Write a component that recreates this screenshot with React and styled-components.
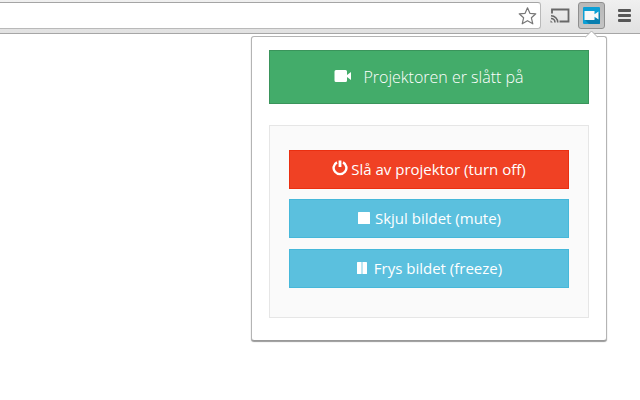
import React from "react";
import styled, { createGlobalStyle } from "styled-components";

const GlobalStyle = createGlobalStyle`
  * { box-sizing: border-box; }
  body {
    margin: 0;
    background: #fff;
    overflow: hidden;
    font-family: "Open Sans", "Noto Sans", sans-serif;
  }
`;

const Screen = styled.main`
  position: relative;
  width: 640px;
  height: 400px;
  overflow: hidden;
`;

const Toolbar = styled.header`
  display: flex;
  align-items: flex-start;
  height: 34px;
  padding-top: 2px;
  background: linear-gradient(#f0f0f0, #e1e1e1);
  border-bottom: 1px solid #a6a6a6;
`;

const AddressField = styled.div`
  display: flex;
  justify-content: flex-end;
  width: 541px;
  height: 27px;
  padding: 3px 3px 0 0;
  background: #fff;
  border: 1px solid #b9b9b9;
  border-top-color: #a5a5a5;
  border-left: 0;
  border-radius: 0 3px 3px 0;
`;

const Actions = styled.div`
  display: flex;
  flex: 1;
`;

const CastIcon = styled.svg`
  width: 20px;
  height: 17px;
  margin: 5px 0 0 9px;
`;

const ExtensionButton = styled.button`
  display: flex;
  width: 27px;
  height: 27px;
  margin-left: 8px;
  padding: 4px;
  background: linear-gradient(#b8b8b8, #c4c4c4);
  border: 1px solid #8f8f8f;
  border-radius: 3px;
`;

const MenuIcon = styled.svg`
  width: 13px;
  height: 14px;
  margin: 7px 0 0 13px;
`;

const Popup = styled.section`
  position: absolute;
  left: 251px;
  top: 36px;
  width: 356px;
  height: 305px;
  padding: 13px 17px;
  background: #fff;
  border: 1px solid #b4b4b4;
  border-bottom-color: #999;
  border-radius: 3px;
  box-shadow: 0 1px 1px #999;
`;

const PopupArrow = styled.svg`
  position: absolute;
  left: 333px;
  top: -7px;
  width: 13px;
  height: 8px;
`;

const StatusBanner = styled.div`
  display: flex;
  align-items: center;
  justify-content: center;
  gap: 12px;
  height: 54px;
  padding-right: 1px;
  background: #43ac6a;
  border: 1px solid #3a945b;
  color: #fff;
  font-size: 16px;
  font-weight: 300;
  white-space: nowrap;
`;

const ControlPanel = styled.div`
  display: flex;
  flex-direction: column;
  height: 193px;
  margin-top: 21px;
  padding: 24px 19px;
  background: #fafafa;
  border: 1px solid #e6e6e6;
`;

const tones = {
  danger: { fill: "#f04124", edge: "#ea2f10", inset: 0 },
  info: { fill: "#5bc0de", edge: "#46b8da", inset: 1 },
};

const ControlButton = styled.button`
  display: flex;
  align-items: center;
  justify-content: center;
  gap: ${({ $gap }) => $gap}px;
  height: 39px;
  margin: 0 0 ${({ $below }) => $below}px;
  padding: 0 0 2px ${({ $tone }) => tones[$tone].inset}px;
  background: ${({ $tone }) => tones[$tone].fill};
  border: 1px solid ${({ $tone }) => tones[$tone].edge};
  color: #fff;
  font: 400 15px "Open Sans", "Noto Sans", sans-serif;
  white-space: nowrap;
`;

const Glyph = styled.svg`
  flex: none;
  width: ${({ $w }) => $w}px;
  height: ${({ $h }) => $h}px;
  margin-bottom: ${({ $raise = 0 }) => $raise}px;
`;

export default function App() {
  return (
    <Screen>
      <GlobalStyle />
      <Toolbar>
        <AddressField>
          <Glyph $w={20} $h={20} viewBox="0 0 20 20">
            <path
              d="M10.5 1.8 L12.9 7.3 L18.8 7.8 L14.4 11.8 L15.8 17.8 L10.5 14.7 L5.2 17.8 L6.6 11.8 L2.2 7.8 L8.1 7.3 Z"
              fill="#fff" stroke="#777" strokeWidth="1.2" strokeLinejoin="round"
            />
          </Glyph>
        </AddressField>
        <Actions>
          <CastIcon viewBox="0 0 20 17" fill="none" stroke="#686868">
            <path d="M2 6.5 V2.5 H18.5 V14.5 H9.5" strokeWidth="1.8" />
            <path d="M1 8.7 A6.8 6.8 0 0 1 7.8 15.5 M1 11.5 A4 4 0 0 1 5 15.5" strokeWidth="1.6" />
            <path d="M.5 13.2 L2.8 15.5 H.5 Z" fill="#686868" stroke="none" />
          </CastIcon>
          <ExtensionButton aria-label="Projektor">
            <Glyph $w={17} $h={17} viewBox="0 0 17 17">
              <rect width="17" height="17" rx="1" fill="#0b9fd5" />
              <path d="M12 12 L15.5 5 L17 6.5 V16 Q17 17 16 17 H6 L2 13 Z" fill="#087eaf" />
              <path d="M1.5 4 H11.5 V7.3 L15.5 4.5 V12.5 L11.5 9.7 V13 H1.5 Z" fill="#f8f8f8" />
            </Glyph>
          </ExtensionButton>
          <MenuIcon viewBox="0 0 13 14" fill="#565656">
            <rect y="0" width="13" height="3" rx="1" />
            <rect y="5" width="13" height="3" rx="1" />
            <rect y="10" width="13" height="3" rx="1" />
          </MenuIcon>
        </Actions>
      </Toolbar>
      <Popup>
        <PopupArrow viewBox="0 0 13 8">
          <path d="M0 7.5 L6.5 1 L13 7.5 V8 H0 Z" fill="#fff" />
          <path d="M0 7.5 L6.5 1 L13 7.5" fill="none" stroke="#b0b0b0" />
        </PopupArrow>
        <StatusBanner>
          <Glyph $w={18} $h={12} $raise={2} viewBox="0 0 18 12" fill="#fff">
            <path d="M3 0 H12.5 Q14 0 14 1.5 V5 L18 2 V10 L14 7 V10.5 Q14 12 12.5 12 H3 Q1.5 12 1.5 10.5 V1.5 Q1.5 0 3 0 Z" />
          </Glyph>
          <span>Projektoren er slått på</span>
        </StatusBanner>
        <ControlPanel>
          <ControlButton $tone="danger" $gap={3} $below={10}>
            <Glyph $w={16} $h={16} $raise={1} viewBox="0 0 16 16" fill="none" stroke="#fff">
              <path d="M5 2.4 A6.4 6.2 0 1 0 11 2.4" strokeWidth="2.4" />
              <path d="M8 .5 V7" strokeWidth="2.8" />
            </Glyph>
            <span>Slå av projektor (turn off)</span>
          </ControlButton>
          <ControlButton $tone="info" $gap={5} $below={11}>
            <Glyph $w={12} $h={12} viewBox="0 0 12 12" fill="#fff">
              <rect width="12" height="12" rx=".5" />
            </Glyph>
            <span>Skjul bildet (mute)</span>
          </ControlButton>
          <ControlButton $tone="info" $gap={7} $below={0}>
            <Glyph $w={10} $h={12} viewBox="0 0 10 12" fill="#fff">
              <rect width="4.6" height="12" rx=".5" />
              <rect x="5.4" width="4.6" height="12" rx=".5" />
            </Glyph>
            <span>Frys bildet (freeze)</span>
          </ControlButton>
        </ControlPanel>
      </Popup>
    </Screen>
  );
}
